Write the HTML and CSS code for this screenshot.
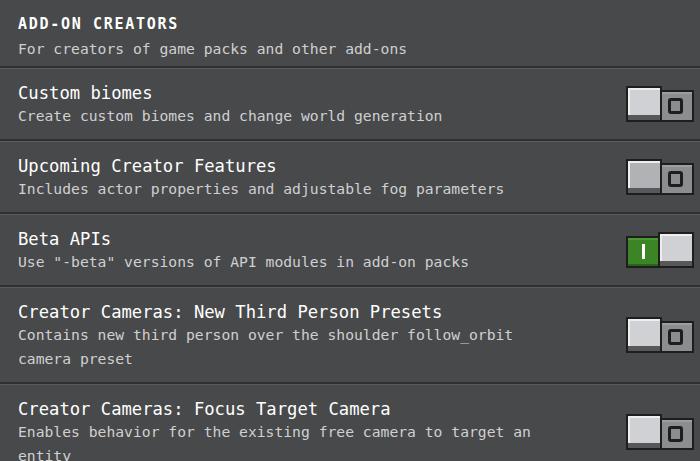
FILE: index.html
```html
<!DOCTYPE html>
<html lang="en">
<head>
<meta charset="UTF-8">
<meta name="viewport" content="width=device-width, initial-scale=1.0">
<title>Add-On Creators</title>
<link rel="stylesheet" href="styles.css">
</head>
<body>
    <div class="panel">
        <div class="section-head">
            <h1>ADD-ON CREATORS</h1>
            <p class="desc">For creators of game packs and other add-ons</p>
        </div>

        <div class="row">
            <div class="text">
                <div class="title">Custom biomes</div>
                <div class="desc">Create custom biomes and change world generation</div>
            </div>
            <div class="toggle">
                <div class="knob"></div>
                <div class="track"><span class="ring"></span></div>
            </div>
        </div>

        <div class="row">
            <div class="text">
                <div class="title">Upcoming Creator Features</div>
                <div class="desc">Includes actor properties and adjustable fog parameters</div>
            </div>
            <div class="toggle hover">
                <div class="knob"></div>
                <div class="track"><span class="ring"></span></div>
            </div>
        </div>

        <div class="row">
            <div class="text">
                <div class="title">Beta APIs</div>
                <div class="desc">Use "-beta" versions of API modules in add-on packs</div>
            </div>
            <div class="toggle on">
                <div class="track"><span class="bar"></span></div>
                <div class="knob"></div>
            </div>
        </div>

        <div class="row">
            <div class="text">
                <div class="title">Creator Cameras: New Third Person Presets</div>
                <div class="desc">Contains new third person over the shoulder follow_orbit camera preset</div>
            </div>
            <div class="toggle">
                <div class="knob"></div>
                <div class="track"><span class="ring"></span></div>
            </div>
        </div>

        <div class="row">
            <div class="text">
                <div class="title">Creator Cameras: Focus Target Camera</div>
                <div class="desc">Enables behavior for the existing free camera to target an entity</div>
            </div>
            <div class="toggle">
                <div class="knob"></div>
                <div class="track"><span class="ring"></span></div>
            </div>
        </div>
    </div>
</body>
</html>
```

FILE: styles.css
```css
body {
    margin: 0;
    padding: 0;
    background-color: #48494a;
    font-family: "DejaVu Sans Mono", "Liberation Mono", monospace;
    color: #ffffff;
    overflow: hidden;
}

.panel {
    width: 700px;
}

/* Заголовок секції */
.section-head {
    padding: 14px 18px 5px;
    border-bottom: 2px solid #2f3032;
}

.section-head h1 {
    margin: 0;
    font-size: 15px;
    line-height: 20px;
    font-weight: bold;
    letter-spacing: 1.7px;
}

.section-head .desc {
    margin: 3px 0 0;
}

.desc {
    font-size: 14.7px;
    line-height: 24px;
    color: #cfd0d2;
}

/* Рядок налаштування */
.row {
    display: flex;
    align-items: center;
    justify-content: space-between;
    padding: 13px 6px 11px 18px;
    border-top: 1px solid #5a5b5d;
    border-bottom: 2px solid #2f3032;
}

.text {
    max-width: 530px;
}

.title {
    font-size: 17.2px;
    line-height: 22px;
}

/* Перемикач */
.toggle {
    display: flex;
    align-items: flex-end;
    height: 36px;
    margin-bottom: 3px;
}

.knob {
    width: 32px;
    height: 32px;
    border: 2px solid #1e1e1f;
    background-color: #d0d1d4;
    box-shadow: inset 0 -5px 0 #58585a, inset 2px 2px 0 #eeeeef;
    position: relative;
    z-index: 1;
}

.toggle.hover .knob {
    background-color: #b1b2b5;
}

.track {
    width: 30px;
    height: 28px;
    border: 2px solid #1e1e1f;
    background-color: #8c8d90;
    box-shadow: inset 0 2px 0 #9d9ea1;
    margin-left: -2px;
    display: flex;
    align-items: center;
    justify-content: center;
}

.toggle.on .track {
    margin-left: 0;
    margin-right: -2px;
    background-color: #3c8527;
    box-shadow: inset 0 2px 0 #4a9a33, inset 0 -2px 0 #2a641b;
}

.ring {
    width: 9px;
    height: 10px;
    border: 3px solid #1e1e1f;
    border-radius: 3px;
    margin-right: 3px;
}

.bar {
    width: 3px;
    height: 15px;
    background-color: #ffffff;
}
```
